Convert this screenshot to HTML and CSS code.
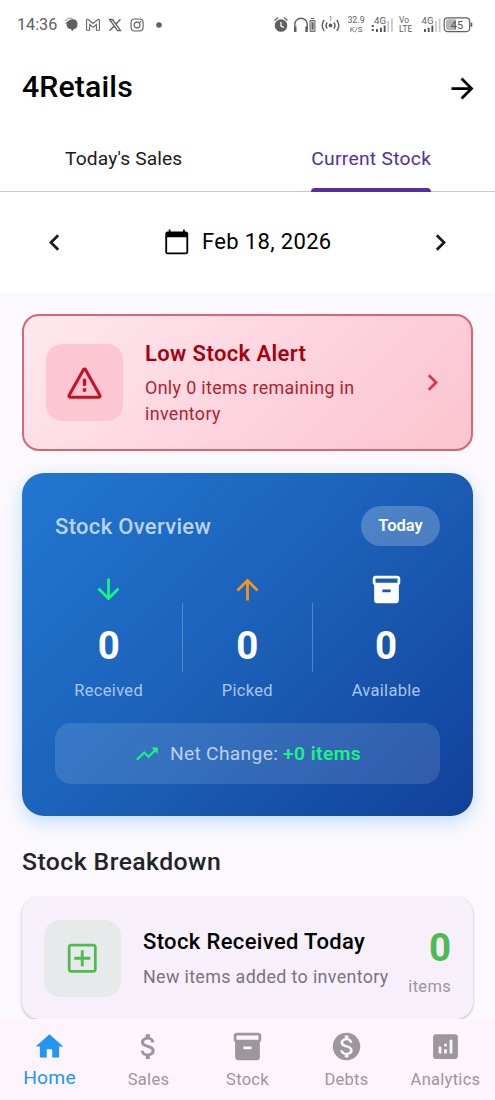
FILE: index.html
```html
<!DOCTYPE html>
<html lang="en">
<head>
<meta charset="utf-8">
<title>4Retails</title>
<link rel="stylesheet" href="styles.css">
</head>
<body>
<div class="app">
  <header class="status">
    <span class="status-time">14:36</span>
    <svg class="status-left" width="106" height="20" viewBox="0 0 106 20">
      <path d="M7 4.500c4-1 6.500 1 6.500 4.500 0 3-1.500 5-3.500 5l-2 2.500-1-2.500c-3 0-4.500-2-4.500-5 0-2 1.500-4 4.500-4.500z" fill="#606060"/>
      <path d="M1.500 6c1-2.500 4-3.500 7-2.500M1.500 9l1-2" stroke="#888" fill="none"/>
      <path d="M22.600 15.300V5.500q0-1.500 1.500-1l4.900 4 4.900-4q1.500-.5 1.500 1v9.800h-3V9.500l-3.400 2.800-3.400-2.800v5.800z" fill="none" stroke="#666" stroke-width="1.100"/>
      <path d="M45.500 4.500h3l8 11.200h-3zM56.500 4.300l-4.700 5M50 11.300l-4.500 4.500" fill="none" stroke="#606060" stroke-width="1.300"/>
      <rect x="67.100" y="4" width="12" height="12" rx="3.500" fill="none" stroke="#606060" stroke-width="1.100"/>
      <circle cx="73.100" cy="10" r="2.900" fill="none" stroke="#606060" stroke-width="1.100"/>
      <circle cx="76.500" cy="6.700" r=".8" fill="#606060"/>
      <circle cx="95" cy="10" r="2.800" fill="#606060"/>
    </svg>
    <div class="status-right">
      <svg width="68" height="20" viewBox="0 0 68 20">
        <circle cx="8" cy="10.500" r="6.300" fill="#606060"/>
        <path d="M1.500 5.500l3.500-3M14.500 5.500l-3.500-3" stroke="#606060" stroke-width="1.400"/>
        <path d="M8 7v4l3 1.500" stroke="#fff" stroke-width="1.300" fill="none"/>
        <path d="M21.800 14V9.500a6.200 6.200 0 0 1 12.400 0V14" fill="none" stroke="#606060" stroke-width="1.400"/>
        <path d="M21 11.500h2.500v5.500H21zM32.300 11.500h2.500v5.500h-2.500z" fill="#606060"/>
        <path d="M37 5.500h5v11h-5z" fill="#c4c4c4" stroke="#707070"/><path d="M38.700 7.500h1.800v7h-1.800z" fill="#606060"/><path d="M38 3.500h3" stroke="#606060"/>
        <circle cx="57.500" cy="10.500" r="1.900" fill="#606060"/>
        <path d="M54.200 7.500q-2.300 3 0 6M60.800 7.500q2.300 3 0 6M51.200 5q-4 5.500 0 11M63.800 5q4 5.500 0 11" fill="none" stroke="#606060" stroke-width="1.500"/>
        <text x="55.800" y="5.500" font-size="6.500" fill="#606060">1</text>
      </svg>
      <span class="duo speed"><span>32.9</span><span class="small">K/S</span></span>
      <svg class="sig1" width="23" height="20" viewBox="0 0 23 20">
        <text x="3" y="8.700" font-size="9.600" fill="#606060" textLength="12">4G</text>
        <path d="M.8 10h2v2h-2zM.8 14h2v2h-2zM5 14h1.900v3H5zM9 12.800h1.900V17H9zM12.700 10.500h1.900V17h-1.900z" fill="#555"/>
        <path d="M16.300 6h1.800v11h-1.800zM20 3.500h1.800V17H20z" fill="#c9c9c9"/>
      </svg>
      <span class="duo volte"><span>Vo</span><span>LTE</span></span>
      <svg class="sig2" width="23" height="20" viewBox="0 0 23 20">
        <text x="1.500" y="8.700" font-size="9.600" fill="#606060" textLength="12">4G</text>
        <path d="M4 14h1.900v3H4zM7.700 12.800h1.900V17H7.700zM11.400 10.500h1.900V17h-1.900z" fill="#555"/>
        <path d="M15.200 6H17v11h-1.800zM18.700 3.500h1.800V17h-1.800z" fill="#c9c9c9"/>
      </svg>
      <svg width="30" height="20" viewBox="0 0 30 20">
        <rect x="1.200" y="2.800" width="25.500" height="13.800" rx="3.500" fill="#fff" stroke="#606060" stroke-width="1.200"/>
        <path d="M5 4.200h8v11H5a2 2 0 0 1-2-2v-7a2 2 0 0 1 2-2z" fill="#b5b5b5"/>
        <path d="M27.500 7.700h1.800v4h-1.800z" fill="#606060"/>
        <text x="7.700" y="13.800" font-size="11" fill="#555" textLength="12.500">45</text>
      </svg>
    </div>
  </header>

  <div class="appbar">
    <h1>4Retails</h1>
    <svg class="i33" viewBox="0 0 24 24"><path d="M12 4l-1.410 1.410L16.170 11H4v2h12.170l-5.580 5.590L12 20l8-8z"/></svg>
  </div>

  <nav class="tabs">
    <div class="tab"><span class="tab-label today-tab">Today's Sales</span></div>
    <div class="tab"><span class="tab-label active">Current Stock</span></div>
  </nav>

  <div class="datebar">
    <svg class="i33 nav-arrow" viewBox="0 0 24 24"><path d="M15.410 7.410L14 6l-6 6 6 6 1.410-1.410L10.830 12z"/></svg>
    <div class="date">
      <svg class="i27" viewBox="0 0 24 24"><path d="M20 3h-1V1.200h-1.500V3h-11V1.200H5V3H4c-1.100 0-2 .9-2 2v16c0 1.100.9 2 2 2h16c1.100 0 2-.9 2-2V5c0-1.100-.9-2-2-2zm.4 18.400H3.600V8h16.800v13.400z"/></svg>
      <span class="date-text">Feb 18, 2026</span>
    </div>
    <svg class="i33 nav-arrow" viewBox="0 0 24 24"><path d="M10 6L8.590 7.410 13.170 12l-4.580 4.590L10 18l6-6z"/></svg>
  </div>

  <main>
    <section class="alert">
      <div class="tile tile-red">
        <svg class="i41" viewBox="0 0 24 24"><path d="M11.400 3.900L3 18.900a.7.7 0 0 0 .6 1.100h16.800a.7.7 0 0 0 .6-1.100L12.600 3.900a.7.7 0 0 0-1.200 0z" fill="none" stroke="currentColor" stroke-width="1.800" stroke-linejoin="round"/><path d="M11 10a1 1 0 0 1 2 0v2.600a1 1 0 0 1-2 0zM11 14.800h2v2h-2z"/></svg>
      </div>
      <div class="alert-text">
        <h2>Low Stock Alert</h2>
        <p>Only 0 items remaining in<br>inventory</p>
      </div>
      <svg class="i33 alert-arrow" viewBox="0 0 24 24"><path d="M10 6L8.590 7.410 13.170 12l-4.580 4.590L10 18l6-6z"/></svg>
    </section>

    <section class="overview">
      <div class="overview-head">
        <h2>Stock Overview</h2>
        <span class="pill">Today</span>
      </div>
      <div class="stats">
        <div class="stat">
          <svg class="i33 green" viewBox="0 0 24 24"><path d="M20 12l-1.410-1.410L13 16.170V4h-2v12.170l-5.580-5.590L4 12l8 8z"/></svg>
          <b>0</b><span>Received</span>
        </div>
        <i class="rule"></i>
        <div class="stat">
          <svg class="i33 orange" viewBox="0 0 24 24"><path d="M4 12l1.410 1.410L11 7.830V20h2V7.830l5.580 5.590L20 12l-8-8z"/></svg>
          <b>0</b><span>Picked</span>
        </div>
        <i class="rule"></i>
        <div class="stat">
          <svg class="i33" viewBox="0 0 24 24"><path fill-rule="evenodd" d="M20 2H4c-1 0-2 .9-2 2v3.010c0 .72.430 1.340 1 1.690V20c0 1.100 1.100 2 2 2h14c.9 0 2-.9 2-2V8.700c.57-.35 1-.97 1-1.690V4c0-1.100-1-2-2-2zm-5 12H9v-2h6v2zm5-7H4V4h16v3z"/></svg>
          <b>0</b><span>Available</span>
        </div>
      </div>
      <div class="net">
        <svg class="green net-icon" viewBox="0 0 24 24"><path d="M16 6l2.290 2.290-4.880 4.880-4-4L2 16.590 3.410 18l6-6 4 4 6.300-6.290L22 12V6z"/></svg>
        <span class="net-label">Net Change:</span><span class="net-value">+0 items</span>
      </div>
    </section>

    <h2 class="section-title">Stock Breakdown</h2>

    <section class="breakdown">
      <div class="tile tile-green">
        <svg class="i38" viewBox="0 0 24 24"><path d="M19 3H5c-1.110 0-2 .9-2 2v14c0 1.100.89 2 2 2h14c1.100 0 2-.9 2-2V5c0-1.100-.9-2-2-2zm.3 16.300H4.700V4.700h14.600v14.600zM11.100 17h1.800v-4.100H17v-1.800h-4.100V7h-1.800v4.100H7v1.800h4.100z"/></svg>
      </div>
      <div class="breakdown-text">
        <h3>Stock Received Today</h3>
        <p>New items added to inventory</p>
      </div>
      <div class="count"><b>0</b><span>items</span></div>
    </section>
  </main>

  <nav class="bottom">
    <div class="item selected">
      <svg class="i33" viewBox="0 0 24 24"><path d="M10 20v-6h4v6h5v-8h3L12 3 2 12h3v8z"/></svg><span>Home</span>
    </div>
    <div class="item">
      <svg class="i33" viewBox="0 0 24 24"><path d="M11.800 10.900c-2.270-.59-3-1.200-3-2.150 0-1.090 1.010-1.850 2.700-1.850 1.780 0 2.440.85 2.500 2.100h2.210c-.07-1.720-1.120-3.300-3.210-3.810V3h-3v2.160c-1.940.42-3.500 1.680-3.500 3.610 0 2.310 1.910 3.460 4.700 4.130 2.500.6 3 1.480 3 2.410 0 .69-.49 1.790-2.700 1.790-2.060 0-2.870-.92-2.980-2.100h-2.200c.12 2.190 1.760 3.420 3.680 3.830V21h3v-2.150c1.950-.37 3.500-1.500 3.500-3.550 0-2.840-2.430-3.810-4.700-4.400z"/></svg><span>Sales</span>
    </div>
    <div class="item">
      <svg class="i33" viewBox="0 0 24 24"><path fill-rule="evenodd" d="M20 2H4c-1 0-2 .9-2 2v3.010c0 .72.430 1.340 1 1.690V20c0 1.100 1.100 2 2 2h14c.9 0 2-.9 2-2V8.700c.57-.35 1-.97 1-1.690V4c0-1.100-1-2-2-2zm-5 12H9v-2h6v2zm5-7H4V4h16v3z"/></svg><span>Stock</span>
    </div>
    <div class="item">
      <svg class="i33" viewBox="0 0 24 24"><path d="M12 2C6.480 2 2 6.480 2 12s4.480 10 10 10 10-4.480 10-10S17.520 2 12 2zm1.410 16.090V20h-2.670v-1.930c-1.710-.36-3.160-1.460-3.270-3.400h1.960c.1 1.050.82 1.870 2.650 1.870 1.960 0 2.400-.98 2.400-1.590 0-.83-.44-1.610-2.670-2.140-2.480-.6-4.180-1.620-4.180-3.670 0-1.720 1.390-2.840 3.110-3.210V4h2.670v1.950c1.860.45 2.790 1.860 2.850 3.390H14.300c-.05-1.110-.64-1.870-2.220-1.870-1.500 0-2.400.68-2.400 1.640 0 .84.65 1.390 2.670 1.910s4.180 1.390 4.180 3.910c-.01 1.830-1.380 2.830-3.120 3.160z"/></svg><span>Debts</span>
    </div>
    <div class="item">
      <svg class="i33" viewBox="0 0 24 24"><path d="M19 3H5c-1.100 0-2 .9-2 2v14c0 1.100.9 2 2 2h14c1.100 0 2-.9 2-2V5c0-1.100-.9-2-2-2zM9 17H7v-5h2v5zm4 0h-2v-3h2v3zm0-5h-2v-2h2v2zm4 5h-2V7h2v10z"/></svg><span>Analytics</span>
    </div>
  </nav>
</div>
</body>
</html>
```
FILE: styles.css
```css
* { box-sizing: border-box; }
body, h1, h2, h3, p { margin: 0; }
body { font-family: Roboto, "Liberation Sans", sans-serif; color: #000; background: #fbf9fd; }
svg { display: block; flex: none; fill: currentColor; }
.app { width: 495px; height: 1100px; display: flex; flex-direction: column; overflow: hidden; white-space: nowrap; }
.i27 { width: 27.500px; height: 27.500px; }
.i33 { width: 33px; height: 33px; }
.i38 { width: 38.500px; height: 38.500px; }
.i41 { width: 41px; height: 41px; }

.status { height: 50px; flex: none; display: flex; align-items: center; padding-left: 17px; background: #fff; color: #606060; }
.status-time { width: 47px; font-size: 16.200px; line-height: 20px; }
.status-right { display: flex; align-items: center; margin-left: auto; padding-right: 22px; }
.duo { display: flex; flex-direction: column; align-items: center; font-size: 8.800px; line-height: 9px; }
.duo .small { font-size: 7.800px; }
.speed { width: 22px; margin-left: 4px; }
.volte { width: 15px; margin: 0 6px 0 5px; align-items: flex-start; font-size: 8.400px; line-height: 9.500px; }
.sig1 { margin-left: 4px; }

.appbar { height: 76px; flex: none; display: flex; align-items: center; justify-content: space-between; padding: 0 16px 0 22px; background: #fff; }
h1 { font-size: 30.250px; font-weight: 500; line-height: 38px; letter-spacing: .13px; padding-bottom: 2px; }

.tabs { height: 66px; flex: none; display: grid; grid-template-columns: 1fr 1fr; background: #fff; border-bottom: 1.400px solid #cac6cd; }
.tab { display: flex; justify-content: center; }
.tab-label { height: 66px; line-height: 65px; font-size: 19.250px; letter-spacing: .28px; color: #1d1b20; }
.today-tab { letter-spacing: .1px; }
.tab-label.active { color: #512da8; }
.tab-label.active::after { content: ""; display: block; height: 4px; margin-top: -3px; border-radius: 4px 4px 0 0; background: #5a2d9c; }

.datebar { height: 100px; flex: none; display: flex; align-items: center; justify-content: space-between; padding: 0 38px; background: #fff; }
.date { display: flex; align-items: center; gap: 11px; }
.date-text { font-size: 22px; line-height: 28px; letter-spacing: .36px; }
.nav-arrow { color: #1d1b20; }

main { height: 727px; flex: none; padding: 22px 22px 0; }
.alert { height: 137px; display: flex; align-items: center; padding: 0 22px; border: 2px solid #d96676; border-radius: 17px; background: linear-gradient(135deg, #ffe8ef, #fbc3d0); color: #b71c2c; }
.tile { width: 77px; height: 77px; flex: none; display: grid; place-items: center; border-radius: 16px; }
.tile-red { background: #fcc6d3; color: #c4122a; padding-top: 2px; }
.alert-text { flex: 1; margin-left: 22px; padding-top: 1px; }
.alert h2 { font-size: 22px; line-height: 28px; font-weight: 600; letter-spacing: .38px; color: #a80010; }
.alert p { margin-top: 7px; font-size: 17.900px; line-height: 26px; letter-spacing: .34px; }
.alert-arrow { color: #e5344b; }

.overview { height: 343px; margin-top: 22px; padding: 33px; border-radius: 22px; background: linear-gradient(135deg, #2277d1, #1b60b8 50%, #12409a); box-shadow: 0 6px 18px rgba(33, 140, 235, .25); color: #fff; }
.overview-head { height: 40px; display: flex; align-items: center; justify-content: space-between; }
.overview h2 { font-size: 22px; font-weight: 500; letter-spacing: .32px; color: #bbd3f3; }
.pill { width: 79px; line-height: 40px; text-align: center; border-radius: 20px; background: rgba(255, 255, 255, .22); font-size: 16.500px; font-weight: 600; }
.stats { height: 133px; margin-top: 27px; display: flex; align-items: center; justify-content: space-around; }
.stat { display: flex; flex-direction: column; align-items: center; margin-top: -3px; }
.stat b { margin-top: 17px; font-size: 38.500px; line-height: 46px; font-weight: 700; }
.stat span { margin-top: 10px; font-size: 16.500px; line-height: 24px; letter-spacing: .3px; color: #a9c6ec; }
.rule { width: 1.400px; height: 69px; margin-bottom: 4px; background: rgba(255, 255, 255, .25); }
.green { color: #1af482; }
.orange { color: #f7941d; }
.net { height: 61px; margin-top: 17px; display: flex; align-items: center; justify-content: center; border-radius: 16px; background: rgba(255, 255, 255, .12); font-size: 19.250px; letter-spacing: .3px; }
.net-icon { width: 26px; height: 26px; margin-right: 10px; }
.net-label { margin-right: 5px; color: #bbd0ee; }
.net-value { color: #1af482; font-weight: 600; letter-spacing: .4px; }

.section-title { margin-top: 30px; font-size: 24.750px; line-height: 32px; font-weight: 500; letter-spacing: .44px; color: #242328; }
.breakdown { height: 122px; margin-top: 19px; padding: 0 22px; display: flex; align-items: center; border-radius: 17px; background: #f7f0fb; box-shadow: 0 1px 3px rgba(0, 0, 0, .28); }
.tile-green { background: #e7e9eb; color: #4cbb50; }
.breakdown-text { flex: 1; margin-left: 22px; padding-top: 2px; }
h3 { font-size: 22px; line-height: 28px; font-weight: 500; letter-spacing: .36px; }
.breakdown p { margin-top: 8px; font-size: 17.900px; line-height: 26px; letter-spacing: .34px; color: #79747e; }
.count { display: flex; flex-direction: column; align-items: flex-end; padding-top: 7px; }
.count b { font-size: 38.500px; line-height: 46px; color: #4cbb50; }
.count span { margin-top: 4px; font-size: 16.500px; line-height: 24px; letter-spacing: .3px; color: #9c95a1; }

.bottom { height: 81px; flex: none; display: grid; grid-template-columns: repeat(5, 1fr); background: #fef4fe; position: relative; color: #9c969d; }
.item { display: flex; flex-direction: column; align-items: center; padding-top: 11px; }
.item span { margin-top: 6px; font-size: 16.500px; line-height: 22px; letter-spacing: .28px; }
.item.selected { color: #2196f3; }
.item.selected span { margin-top: 4px; font-size: 19.250px; letter-spacing: .2px; }
```
